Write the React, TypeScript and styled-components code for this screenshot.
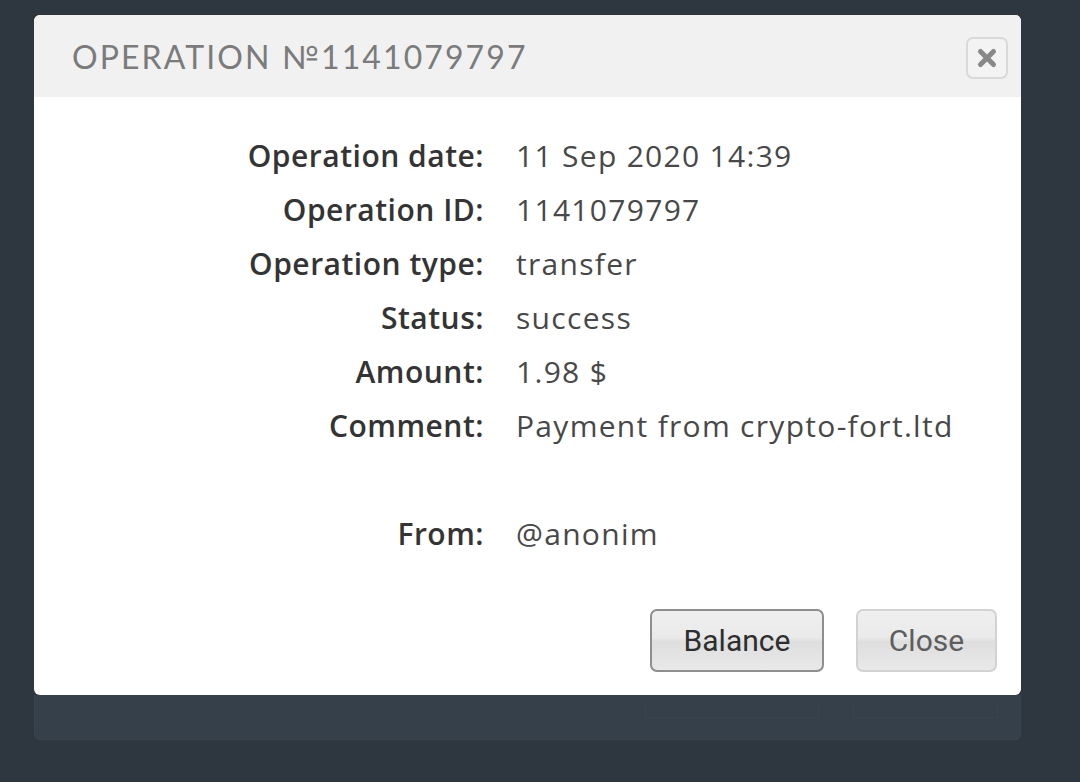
import React from "react";
import styled, { createGlobalStyle } from "styled-components";

const Global = createGlobalStyle`
  html, body { margin: 0; padding: 0; }
  body {
    background: #2e3740;
    width: 1080px;
    height: 782px;
    overflow: hidden;
    font-family: "Open Sans", "Noto Sans", sans-serif;
  }
`;

const Page = styled.div`
  padding: 15px 0 0 34px;
  display: flex;
  flex-direction: column;
`;

const Dialog = styled.div`
  width: 987px;
  background: #ffffff;
  border-radius: 6px;
  overflow: hidden;
  display: flex;
  flex-direction: column;
`;

const Header = styled.div`
  height: 82px;
  background: #f1f1f1;
  display: flex;
  align-items: flex-start;
  justify-content: space-between;
  padding: 0 13px 0 38px;
  box-sizing: border-box;
`;

const Title = styled.h1`
  margin: 0;
  padding-top: 22px;
  font-family: "Lato", "Noto Sans", sans-serif;
  font-weight: 400;
  font-size: 32px;
  line-height: 40px;
  letter-spacing: 2.1px;
  color: #7b7b7b;
`;

const CloseX = styled.button`
  margin-top: 22px;
  width: 42px;
  height: 42px;
  box-sizing: border-box;
  border: 2px solid #d9d9d9;
  border-radius: 7px;
  background: #f3f3f3;
  display: flex;
  align-items: center;
  justify-content: center;
  padding: 0;
`;

const Body = styled.div`
  padding: 31px 24px 23px 0;
  display: flex;
  flex-direction: column;
`;

const Details = styled.dl`
  margin: 0;
  display: grid;
  grid-template-columns: 450px 1fr;
  column-gap: 32px;
  grid-auto-rows: 54px;
  align-items: center;
`;

const Label = styled.dt`
  margin: 0;
  text-align: right;
  font-weight: 600;
  font-size: 30px;
  letter-spacing: 0.5px;
  color: #343434;
  white-space: nowrap;
`;

const Value = styled.dd`
  margin: 0;
  font-weight: 400;
  font-size: 30px;
  letter-spacing: 1.3px;
  color: #484848;
  white-space: nowrap;
`;

const Spacer = styled.div`
  grid-column: 1 / span 2;
`;

const Actions = styled.div`
  margin-top: 49px;
  display: flex;
  justify-content: flex-end;
  gap: 32px;
`;

const Button = styled.button<{ $primary?: boolean }>`
  height: 63px;
  box-sizing: border-box;
  padding: 0 ${(p) => (p.$primary ? "31px" : "30px")};
  min-width: ${(p) => (p.$primary ? "174px" : "141px")};
  border-radius: 7px;
  border: 2px solid ${(p) => (p.$primary ? "#8e8e8e" : "#d2d2d2")};
  background: linear-gradient(
    to bottom,
    #efefef 0%,
    #eaeaea 45%,
    #dedede 52%,
    #e9e9e9 100%
  );
  font-family: "Roboto", "Liberation Sans", sans-serif;
  font-size: 30px;
  color: ${(p) => (p.$primary ? "#2e2e2e" : "#5e5e5e")};
`;

const Shelf = styled.div`
  width: 987px;
  height: 45px;
  box-sizing: border-box;
  background: #35404a;
  border: 1px solid #3a444e;
  border-top: none;
  border-radius: 0 0 6px 6px;
  display: flex;
  justify-content: flex-end;
  align-items: flex-start;
  gap: 34px;
  padding: 6px 22px 0 0;
`;

const Ghost = styled.div<{ $w: number }>`
  width: ${(p) => p.$w}px;
  height: 16px;
  border: 1px solid #39444e;
  border-top: none;
`;

const rows: [string, string][] = [
  ["Operation date:", "11 Sep 2020 14:39"],
  ["Operation ID:", "1141079797"],
  ["Operation type:", "transfer"],
  ["Status:", "success"],
  ["Amount:", "1.98 $"],
  ["Comment:", "Payment from crypto-fort.ltd"],
];

export default function App() {
  return (
    <>
      <Global />
      <Page>
        <Dialog>
          <Header>
            <Title>OPERATION №1141079797</Title>
            <CloseX aria-label="close">
              <svg width="22" height="22" viewBox="0 0 22 22">
                <path
                  d="M4.5 4.5 L17.5 17.5 M17.5 4.5 L4.5 17.5"
                  stroke="#888888"
                  strokeWidth="5"
                  strokeLinecap="round"
                />
              </svg>
            </CloseX>
          </Header>
          <Body>
            <Details>
              {rows.map(([l, v]) => (
                <React.Fragment key={l}>
                  <Label>{l}</Label>
                  <Value>{v}</Value>
                </React.Fragment>
              ))}
              <Spacer />
              <Label>From:</Label>
              <Value>@anonim</Value>
            </Details>
            <Actions>
              <Button $primary>Balance</Button>
              <Button>Close</Button>
            </Actions>
          </Body>
        </Dialog>
        <Shelf>
          <Ghost $w={172} />
          <Ghost $w={143} />
        </Shelf>
      </Page>
    </>
  );
}
